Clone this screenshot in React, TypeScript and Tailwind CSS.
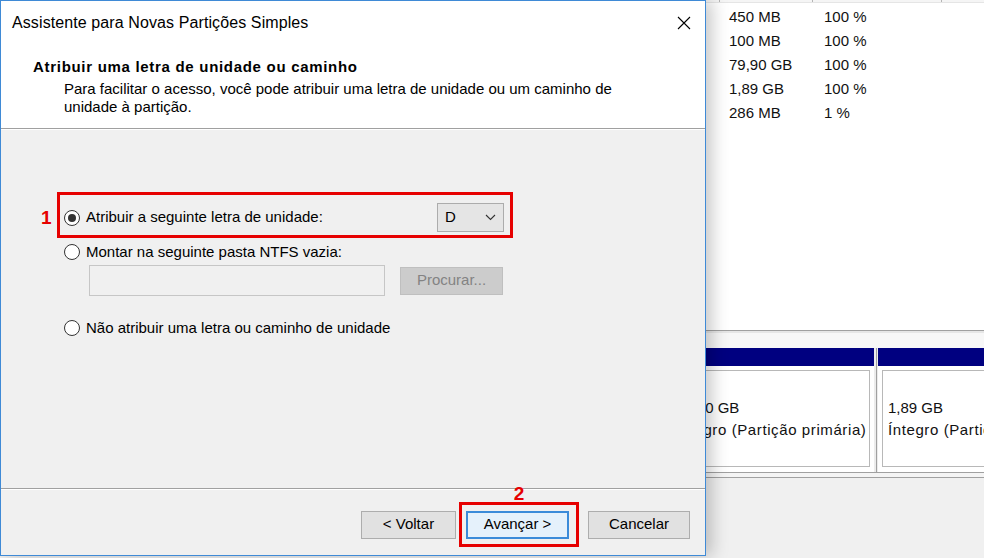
import React from "react";

function Radio({ checked }: { checked?: boolean }) {
  return (
    <span className="flex h-[16px] w-[16px] shrink-0 items-center justify-center rounded-full border border-[#333333] bg-white">
      {checked && <span className="h-[8px] w-[8px] rounded-full bg-[#333333]" />}
    </span>
  );
}

function Dialog() {
  return (
    <div className="relative z-10 flex h-[556px] w-[706px] shrink-0 flex-col border border-[#3f8ad6] bg-[#f0f0f0] shadow-[6px_0_16px_rgba(0,0,0,0.22)]">
      {/* title bar */}
      <div className="flex h-[43px] shrink-0 items-center justify-between bg-white pl-[11px] pr-[14px]">
        <span className="text-[16px] tracking-[0.1px]">Assistente para Novas Partições Simples</span>
        <svg width="14" height="14" viewBox="0 0 14 14">
          <path d="M1 1L13 13M13 1L1 13" stroke="#000" strokeWidth="1.1" fill="none" />
        </svg>
      </div>

      {/* header */}
      <div className="h-[85px] shrink-0 border-b border-[#a0a0a0] bg-white pl-[32px] pt-[13px]">
        <div className="text-[15px] font-bold leading-[20px] tracking-[0.7px]">Atribuir uma letra de unidade ou caminho</div>
        <div className="ml-[31px] mt-[3px] text-[15px] leading-[18px]">
          Para facilitar o acesso, você pode atribuir uma letra de unidade ou um caminho de
          <br />
          unidade à partição.
        </div>
      </div>

      {/* body */}
      <div className="h-[360px] shrink-0 border-y border-b-[#a0a0a0] border-t-white pl-[40px] pt-[62px] text-[15px]">
        <div className="flex items-center">
          <span className="w-[16px] pt-[5px] text-[19px] font-bold leading-none text-[#e60000]">1</span>
          <div className="flex h-[46px] w-[456px] items-center border-[3px] border-[#e60000] pl-[4px] pr-[6px] pt-[5px]">
            <Radio checked />
            <span className="ml-[6px]">Atribuir a seguinte letra de unidade:</span>
            <div className="ml-auto flex h-[29px] w-[67px] items-center justify-between border border-[#acacac] bg-[#e5e5e5] pl-[7px] pr-[7px]">
              <span>D</span>
              <svg width="11" height="7" viewBox="0 0 11 7">
                <path d="M1 1L5.5 5.5L10 1" stroke="#333" strokeWidth="1.1" fill="none" />
              </svg>
            </div>
          </div>
        </div>

        <div className="ml-[23px] mt-[5px] flex h-[18px] items-center">
          <Radio />
          <span className="ml-[6px]">Montar na seguinte pasta NTFS vazia:</span>
        </div>

        <div className="ml-[48px] mt-[4px] flex items-center">
          <div className="h-[31px] w-[296px] border border-[#c6c6c6] bg-[#f0f0f0]" />
          <div className="ml-[15px] flex h-[28px] w-[103px] items-center justify-center border border-[#bfbfbf] bg-[#cccccc] text-[#838383]">
            Procurar...
          </div>
        </div>

        <div className="ml-[23px] mt-[23px] flex h-[18px] items-center">
          <Radio />
          <span className="ml-[6px]">Não atribuir uma letra ou caminho de unidade</span>
        </div>
      </div>

      {/* footer */}
      <div className="flex flex-1 items-start justify-end border-t border-white pr-[15px] pt-[12px] text-[15px]">
        <div className="flex items-center">
          <div className="flex h-[28px] w-[95px] items-center justify-center border border-[#adadad] bg-[#e1e1e1]">
            &lt; Voltar
          </div>
          <div className="relative ml-[3px] flex h-[45px] items-center border-[3px] border-[#e60000] pl-[4px] pr-[7px]">
            <span className="absolute -top-[21px] left-1/2 -translate-x-1/2 text-[19px] font-bold leading-none text-[#e60000]">
              2
            </span>
            <div className="flex h-[28px] w-[103px] items-center justify-center border-2 border-[#3b8bd9] bg-[#e5f1fb]">
              Avançar &gt;
            </div>
          </div>
          <div className="ml-[9px] flex h-[28px] w-[102px] items-center justify-center border border-[#adadad] bg-[#e1e1e1]">
            Cancelar
          </div>
        </div>
      </div>
    </div>
  );
}

const rows = [
  ["450 MB", "100 %"],
  ["100 MB", "100 %"],
  ["79,90 GB", "100 %"],
  ["1,89 GB", "100 %"],
  ["286 MB", "1 %"],
];

function DiskPane() {
  return (
    <div className="flex min-w-0 flex-1 flex-col overflow-hidden text-[15px] text-[#111]">
      <div className="h-[330px] shrink-0 bg-white">
        <div className="flex h-[3px] border-b border-[#e5e5e5] bg-[#f5f5f5]">
          <div className="w-[14px] border-r border-[#b5b5b5]" />
          <div className="w-[93px] border-r border-[#b5b5b5]" />
          <div className="w-[129px] border-r border-[#b5b5b5]" />
        </div>
        <div className="pl-[23px] pt-[2px]">
          {rows.map(([size, pct]) => (
            <div key={size} className="flex h-[24px] items-center">
              <span className="w-[95px]">{size}</span>
              <span>{pct}</span>
            </div>
          ))}
        </div>
      </div>

      <div className="h-[3px] shrink-0 border-t border-[#a0a0a0] bg-[#e6e6e6]" />
      <div className="h-[15px] shrink-0 bg-[#f7f7f7]" />

      <div className="flex h-[124px] shrink-0 bg-white">
        <div className="flex w-[168px] shrink-0 flex-col">
          <div className="h-[18px] bg-[#000080]" />
          <div className="mr-[4px] mt-[4px] h-[97px] border-y border-r border-[#b8b8b8]">
            <div className="mr-[3px] h-full overflow-hidden whitespace-nowrap">
              <div className="-ml-[30px] pt-[26px] leading-[22px] tracking-[0.6px]">
                <div className="tracking-normal">79,90 GB</div>
                <div>Íntegro (Partição primária)</div>
              </div>
            </div>
          </div>
        </div>
        <div className="flex w-[4px] shrink-0 justify-center bg-[#ececec]">
          <div className="w-[1px] bg-[#a0a0a0]" />
        </div>
        <div className="flex min-w-0 flex-1 flex-col">
          <div className="h-[18px] bg-[#000080]" />
          <div className="ml-[4px] mt-[4px] h-[97px] overflow-hidden whitespace-nowrap border-y border-l border-[#b8b8b8]">
            <div className="pl-[5px] pt-[26px] leading-[22px] tracking-[0.6px]">
              <div className="tracking-normal">1,89 GB</div>
              <div>Íntegro (Partição primária)</div>
            </div>
          </div>
        </div>
      </div>

      <div className="h-[6px] shrink-0 border-y border-[#a0a0a0] bg-[#f4f4f4]" />
      <div className="flex-1 bg-[#f0f0f0]" />
    </div>
  );
}

export default function App() {
  return (
    <div className="flex h-[558px] w-[984px] overflow-hidden bg-[#f0f0f0] font-['Liberation_Sans',Arial,sans-serif] text-black">
      <Dialog />
      <DiskPane />
    </div>
  );
}
